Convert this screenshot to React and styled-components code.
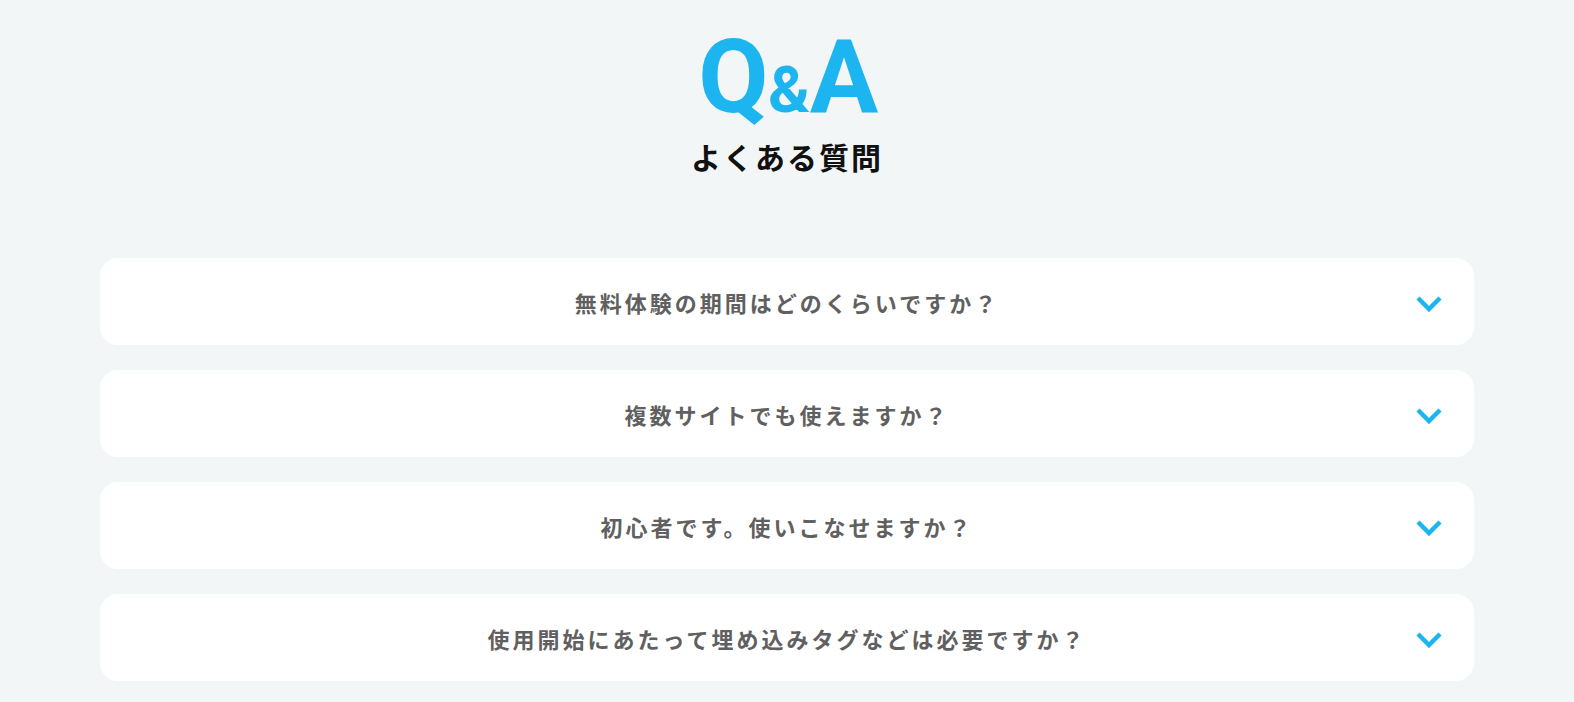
import React from "react";
import styled, { createGlobalStyle } from "styled-components";

const GlobalStyle = createGlobalStyle`
  body {
    margin: 0;
    background: #f3f6f7;
    font-family: "Noto Sans CJK JP", "Noto Sans", sans-serif;
  }
`;

const Section = styled.section`
  display: flex;
  flex-direction: column;
  align-items: center;
  padding: 26px 100px 22px;
`;

const Heading = styled.h2`
  margin: 0;
  display: flex;
  flex-direction: column;
  align-items: center;
`;

const Title = styled.span`
  font-family: Roboto, "Liberation Sans", sans-serif;
  font-weight: 700;
  font-size: 102px;
  line-height: 1;
  color: #1cb5ef;
  letter-spacing: -2.5px;
`;

const Amp = styled.span`
  font-size: 64px;
  margin: 0 2px;
`;

const Subtitle = styled.span`
  margin-top: 8px;
  font-size: 30px;
  font-weight: 700;
  line-height: 40px;
  letter-spacing: 2px;
  color: #111;
`;

const List = styled.div`
  margin-top: 82px;
  width: 100%;
  display: flex;
  flex-direction: column;
  gap: 25px;
`;

const Item = styled.button`
  position: relative;
  display: flex;
  align-items: center;
  justify-content: center;
  height: 87px;
  width: 100%;
  border: none;
  border-radius: 18px;
  background: #fff;
  cursor: pointer;
  font-family: inherit;
  padding: 0 80px;
`;

const Question = styled.span`
  font-size: 22px;
  font-weight: 700;
  letter-spacing: 3px;
  color: #606060;
`;

const Chevron = styled.svg`
  position: absolute;
  right: 31px;
  top: 50%;
  width: 28px;
  height: 18px;
  margin-top: -7px;
`;

const questions = [
  { id: 0, text: "無料体験の期間はどのくらいですか？" },
  { id: 1, text: "複数サイトでも使えますか？" },
  { id: 2, text: "初心者です。使いこなせますか？" },
  { id: 3, text: "使用開始にあたって埋め込みタグなどは必要ですか？" },
];

const App = () => {
  return (
    <>
      <GlobalStyle />
      <Section>
        <Heading>
          <Title>
            Q<Amp>&amp;</Amp>A
          </Title>
          <Subtitle>よくある質問</Subtitle>
        </Heading>
        <List>
          {questions.map((q) => (
            <Item key={`question-` + q.id}>
              <Question>{q.text}</Question>
              <Chevron viewBox="0 0 28 18">
                <polyline
                  points="3,3 14,14 25,3"
                  fill="none"
                  stroke="#1cb5ef"
                  strokeWidth="4.5"
                  strokeLinejoin="miter"
                />
              </Chevron>
            </Item>
          ))}
        </List>
      </Section>
    </>
  );
};

export default App;
